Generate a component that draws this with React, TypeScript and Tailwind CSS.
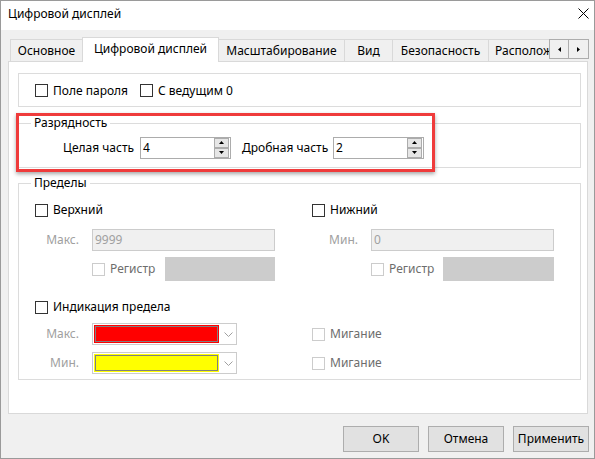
import React from 'react';

const CheckBox: React.FC<{ label: string; disabled?: boolean }> = ({ label, disabled }) => (
  <div className="flex items-center">
    <span
      className={`block w-[13px] h-[13px] border bg-white ${disabled ? 'border-[#cccccc]' : 'border-[#333333]'}`}
    />
    <span className={`ml-[5px] whitespace-nowrap ${disabled ? 'text-[#6d6d6d]' : 'text-black'}`}>{label}</span>
  </div>
);

const Arrow: React.FC<{ dir: 'up' | 'down' | 'left' | 'right' }> = ({ dir }) => {
  if (dir === 'up')
    return (
      <svg width="5" height="3" viewBox="0 0 5 3">
        <path d="M0 3 L2.5 0 L5 3 Z" fill="#000" />
      </svg>
    );
  if (dir === 'down')
    return (
      <svg width="5" height="3" viewBox="0 0 5 3">
        <path d="M0 0 L2.5 3 L5 0 Z" fill="#000" />
      </svg>
    );
  if (dir === 'left')
    return (
      <svg width="3" height="5" viewBox="0 0 3 5">
        <path d="M3 0 L0 2.5 L3 5 Z" fill="#000" />
      </svg>
    );
  return (
    <svg width="3" height="5" viewBox="0 0 3 5">
      <path d="M0 0 L3 2.5 L0 5 Z" fill="#000" />
    </svg>
  );
};

const SpinBox: React.FC<{ value: string }> = ({ value }) => (
  <div className="w-[91px] h-[22px] border border-[#acacac] bg-white flex items-center justify-between">
    <span className="pl-[2px]">{value}</span>
    <div className="flex flex-col mr-[1px]">
      <div className="w-[15px] h-[10px] border border-[#acacac] bg-[#e6e6e6] flex items-center justify-center">
        <Arrow dir="up" />
      </div>
      <div className="w-[15px] h-[10px] border border-[#acacac] bg-[#e6e6e6] flex items-center justify-center">
        <Arrow dir="down" />
      </div>
    </div>
  </div>
);

const DisabledInput: React.FC<{ value: string }> = ({ value }) => (
  <div className="w-[183px] h-[22px] border border-[#cccccc] bg-[#f0f0f0] text-[#a0a0a0] flex items-center pl-[2px]">
    {value}
  </div>
);

const ColorCombo: React.FC<{ color: string; edge: string }> = ({ color, edge }) => (
  <div className="w-[145px] h-[22px] border border-[#cccccc] bg-white flex items-center pl-[1px]">
    <div className={`w-[125px] h-[18px] border ${edge}`}>
      <div className={`w-full h-full border border-[#808080] ${color}`} />
    </div>
    <svg width="9" height="5" viewBox="0 0 9 5" className="ml-[5px]">
      <polyline points="0.5,0.5 4.5,4.5 8.5,0.5" fill="none" stroke="#a0a0a0" strokeWidth="1" />
    </svg>
  </div>
);

const FieldLabel: React.FC<{ text: string; w: string }> = ({ text, w }) => (
  <div className={`${w} text-right pr-[13px] text-[#a0a0a0]`}>{text}</div>
);

const GroupBox: React.FC<{ title?: string; className: string; children: React.ReactNode }> = ({
  title,
  className,
  children,
}) => (
  <div className={`relative w-[563px] border border-[#dcdcdc] ${className}`}>
    {title && <span className="absolute -top-[9px] left-[12px] bg-white px-[3px] leading-[16px]">{title}</span>}
    {children}
  </div>
);

const tabs = [
  { label: 'Основное', w: 'w-[72px]', b: 'border-l border-t' },
  { label: 'Цифровой дисплей', w: 'w-[137px]', b: 'border-l border-t border-r', active: true },
  { label: 'Масштабирование', w: 'w-[126px]', b: 'border-t border-r' },
  { label: 'Вид', w: 'w-[48px]', b: 'border-t border-r' },
  { label: 'Безопасность', w: 'w-[96px]', b: 'border-t border-r' },
];

const App: React.FC = () => {
  return (
    <div className="relative w-[595px] h-[459px] border border-[#9a9a9a] bg-[#f0f0f0] flex flex-col font-['Noto_Sans',sans-serif] text-[12px] leading-[16px] text-black">
      {/* title bar */}
      <div className="h-[29px] bg-white flex items-start justify-between pl-[7px] pr-[5px]">
        <span className="pt-[5px]">Цифровой дисплей</span>
        <svg width="11" height="11" viewBox="0 0 11 11" className="mt-[7px]">
          <path d="M0.5 0.5 L10.5 10.5 M10.5 0.5 L0.5 10.5" stroke="#000" strokeWidth="1" />
        </svg>
      </div>

      <div className="flex-1 pl-[7px] pt-[7px]">
        {/* tab strip */}
        <div className="relative z-10 h-[24px] flex items-end pl-[2px]">
          {tabs.map((t) =>
            t.active ? (
              <div
                key={t.label}
                className={`${t.w} h-[25px] -mb-[1px] bg-white ${t.b} border-[#d9d9d9] flex items-center justify-center pb-[3px] whitespace-nowrap`}
              >
                {t.label}
              </div>
            ) : (
              <div
                key={t.label}
                className={`${t.w} h-[22px] bg-[#f0f0f0] ${t.b} border-[#d9d9d9] flex items-center justify-center whitespace-nowrap`}
              >
                {t.label}
              </div>
            )
          )}
          <div className="w-[60px] h-[22px] border-t border-[#d9d9d9] overflow-hidden whitespace-nowrap pl-[6px] flex items-center">
            Расположение
          </div>
          <div className="flex mb-[2px]">
            <div className="w-[20px] h-[20px] border border-[#adadad] bg-[#f0f0f0] flex items-center justify-center">
              <Arrow dir="left" />
            </div>
            <div className="w-[20px] h-[20px] border border-l-0 border-[#adadad] bg-[#f0f0f0] flex items-center justify-center">
              <Arrow dir="right" />
            </div>
          </div>
        </div>

        {/* tab panel */}
        <div className="w-[580px] h-[353px] border border-[#d9d9d9] bg-white pl-[9px] pt-[11px]">
          <GroupBox className="h-[34px] flex items-center pl-[16px] pt-[1px]">
            <div className="w-[105px]">
              <CheckBox label="Поле пароля" />
            </div>
            <CheckBox label="С ведущим 0" />
          </GroupBox>

          <GroupBox title="Разрядность" className="mt-[16px] h-[45px] flex items-center pt-[4px]">
            <div className="w-[121px] pl-[44px] whitespace-nowrap">Целая часть</div>
            <SpinBox value="4" />
            <div className="w-[102px] pl-[11px] whitespace-nowrap">Дробная часть</div>
            <SpinBox value="2" />
          </GroupBox>

          <GroupBox title="Пределы" className="mt-[15px] h-[197px] pt-[17px] pl-[16px]">
            <div className="flex h-[18px] items-center">
              <div className="w-[277px]">
                <CheckBox label="Верхний" />
              </div>
              <CheckBox label="Нижний" />
            </div>

            <div className="flex h-[22px] items-center mt-[10px]">
              <div className="w-[277px] flex items-center">
                <FieldLabel text="Макс." w="w-[57px]" />
                <DisabledInput value="9999" />
              </div>
              <FieldLabel text="Мин." w="w-[59px]" />
              <DisabledInput value="0" />
            </div>

            <div className="flex h-[24px] items-center mt-[6px]">
              <div className="w-[277px] flex items-center pl-[57px]">
                <div className="w-[73px]">
                  <CheckBox label="Регистр" disabled />
                </div>
                <div className="w-[110px] h-[24px] bg-[#cccccc]" />
              </div>
              <div className="flex items-center pl-[59px]">
                <div className="w-[72px]">
                  <CheckBox label="Регистр" disabled />
                </div>
                <div className="w-[111px] h-[24px] bg-[#cccccc]" />
              </div>
            </div>

            <div className="flex h-[18px] items-center mt-[17px]">
              <CheckBox label="Индикация предела" />
            </div>

            <div className="flex h-[22px] items-center mt-[7px]">
              <div className="w-[277px] flex items-center">
                <FieldLabel text="Макс." w="w-[57px]" />
                <ColorCombo color="bg-[#ff0000]" edge="border-[#ff0000]" />
              </div>
              <CheckBox label="Мигание" disabled />
            </div>

            <div className="flex h-[22px] items-center mt-[7px]">
              <div className="w-[277px] flex items-center">
                <FieldLabel text="Мин." w="w-[57px]" />
                <ColorCombo color="bg-[#ffff00]" edge="border-[#ffff00]" />
              </div>
              <CheckBox label="Мигание" disabled />
            </div>
          </GroupBox>
        </div>

        {/* buttons */}
        <div className="w-[581px] flex justify-end gap-[9px] mt-[12px]">
          {['OK', 'Отмена', 'Применить'].map((b) => (
            <button
              key={b}
              className="w-[76px] h-[26px] bg-[#e1e1e1] border border-[#adadad] flex items-center justify-center"
            >
              {b}
            </button>
          ))}
        </div>
      </div>

      {/* annotation highlight */}
      <div className="absolute left-[15px] top-[112px] w-[419px] h-[59px] border-[3px] border-[#ef3b3b] shadow-[0_2px_4px_rgba(0,0,0,0.35)] pointer-events-none" />
    </div>
  );
};

export default App;
